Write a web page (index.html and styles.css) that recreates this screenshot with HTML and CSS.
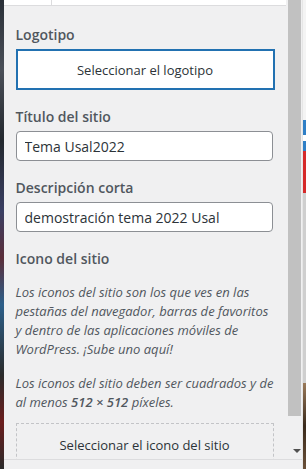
FILE: index.html
```html
<!DOCTYPE html>
<html lang="es">
<head>
    <meta charset="UTF-8">
    <meta name="viewport" content="width=device-width, initial-scale=1.0">
    <title>Identidad del sitio</title>
    <link rel="stylesheet" href="styles.css">
</head>
<body>
    <div class="preview-left"></div>

    <div class="customizer">
        <div class="main">
            <div class="panel">
                <div class="panel-head">
                    <span class="head-cell"></span>
                </div>

                <div class="control first">
                    <span class="control-title">Logotipo</span>
                    <button class="media-btn">Seleccionar el logotipo</button>
                </div>

                <div class="control">
                    <label class="control-title" for="blogname">Título del sitio</label>
                    <input type="text" id="blogname" class="text-input" value="Tema Usal2022">
                </div>

                <div class="control">
                    <label class="control-title" for="blogdesc">Descripción corta</label>
                    <input type="text" id="blogdesc" class="text-input" value="demostración tema 2022 Usal">
                </div>

                <div class="control">
                    <span class="control-title">Icono del sitio</span>
                    <p class="description">Los iconos del sitio son los que ves en las pestañas del navegador, barras de favoritos y dentro de las aplicaciones móviles de WordPress. ¡Sube uno aquí!</p>
                    <p class="description">Los iconos del sitio deben ser cuadrados y de al menos <strong>512&nbsp;×&nbsp;512</strong> píxeles.</p>
                    <button class="upload-btn">Seleccionar el icono del sitio</button>
                </div>
            </div>

            <div class="scrollbar">
                <div class="thumb"></div>
                <div class="arrow"></div>
            </div>
        </div>
        <div class="footer"></div>
    </div>

    <div class="preview-right">
        <div class="pr-top"></div>
        <div class="pr-blue"></div>
        <div class="pr-white"></div>
        <div class="pr-blue small"></div>
        <div class="pr-red"></div>
        <div class="pr-gray"></div>
        <div class="pr-photo"></div>
    </div>
</body>
</html>
```

FILE: styles.css
```css
body {
    margin: 0;
    height: 469px;
    display: flex;
    overflow: hidden;
    font-family: "Open Sans", "Noto Sans", sans-serif;
    color: #3c434a;
    background: #f0f0f1;
}
.preview-left {
    width: 4px;
    background: linear-gradient(#2a3038 0%, #4a4f58 15%, #23282e 30%, #3a3f63 45%, #5b2e3a 55%, #2c5f8a 65%, #2b2b2b 80%, #6b1d1d 90%, #2a2a2a 100%);
}
.customizer {
    width: 298px;
    display: flex;
    flex-direction: column;
}
.main {
    flex: 1;
    display: flex;
    min-height: 0;
}
.panel {
    width: 284px;
    overflow: hidden;
    background: #f0f0f1;
}
.panel-head {
    height: 5px;
    background: #fff;
    border-bottom: 1px solid #dcdcde;
    margin-right: 2px;
}
.head-cell {
    display: block;
    width: 47px;
    height: 5px;
    border-right: 1px solid #dcdcde;
}
.control {
    padding: 0 12px;
    margin-bottom: 15px;
}
.control.first {
    padding-top: 17px;
}
.control-title {
    display: block;
    font-size: 14px;
    font-weight: 600;
    line-height: 24px;
    color: #50575e;
    margin-bottom: 2px;
}
.media-btn {
    display: block;
    width: 259px;
    height: 41px;
    background: #fff;
    border: 2px solid #2271b1;
    font-family: inherit;
    font-size: 13px;
    color: #2c3338;
}
.text-input {
    display: block;
    box-sizing: border-box;
    width: 257px;
    height: 30px;
    padding: 0 8px;
    border: 1px solid #8c8f94;
    border-radius: 4px;
    background: #fff;
    font-family: inherit;
    font-size: 14px;
    color: #2c3338;
}
.description {
    font-style: italic;
    font-size: 13px;
    line-height: 19px;
    color: #50575e;
    margin: 12px 0 11px;
}
.description + .description {
    margin-top: 15px;
}
.description strong {
    font-weight: 600;
}
.upload-btn {
    display: block;
    width: 258px;
    height: 44px;
    background: transparent;
    border: 1px dashed #c3c4c7;
    font-family: inherit;
    font-size: 13px;
    color: #2c3338;
}
.scrollbar {
    width: 14px;
    display: flex;
    flex-direction: column;
    background: #f0f0f1;
}
.thumb {
    height: 416px;
    width: 13px;
    background: #c1c1c1;
}
.arrow {
    margin: auto auto 6px 5px;
    width: 0;
    height: 0;
    border-left: 4px solid transparent;
    border-right: 4px solid transparent;
    border-top: 4px solid #505050;
}
.footer {
    height: 9px;
    border-top: 1px solid #dcdcde;
    background: #f0f0f1;
}
.preview-right {
    width: 4px;
    display: flex;
    flex-direction: column;
    border-left: 1px solid #e6e6e6;
}
.pr-top { height: 120px; background: #f4f4f4; }
.pr-blue { height: 15px; background: #2f7fc6; }
.pr-blue.small { height: 10px; }
.pr-white { height: 6px; background: #fff; }
.pr-red { height: 42px; background: #d62a2a; }
.pr-gray { height: 190px; background: #cfcfcf; }
.pr-photo { flex: 1; background: linear-gradient(#9a7a5a, #3a2a1c, #6a5038); }
```
